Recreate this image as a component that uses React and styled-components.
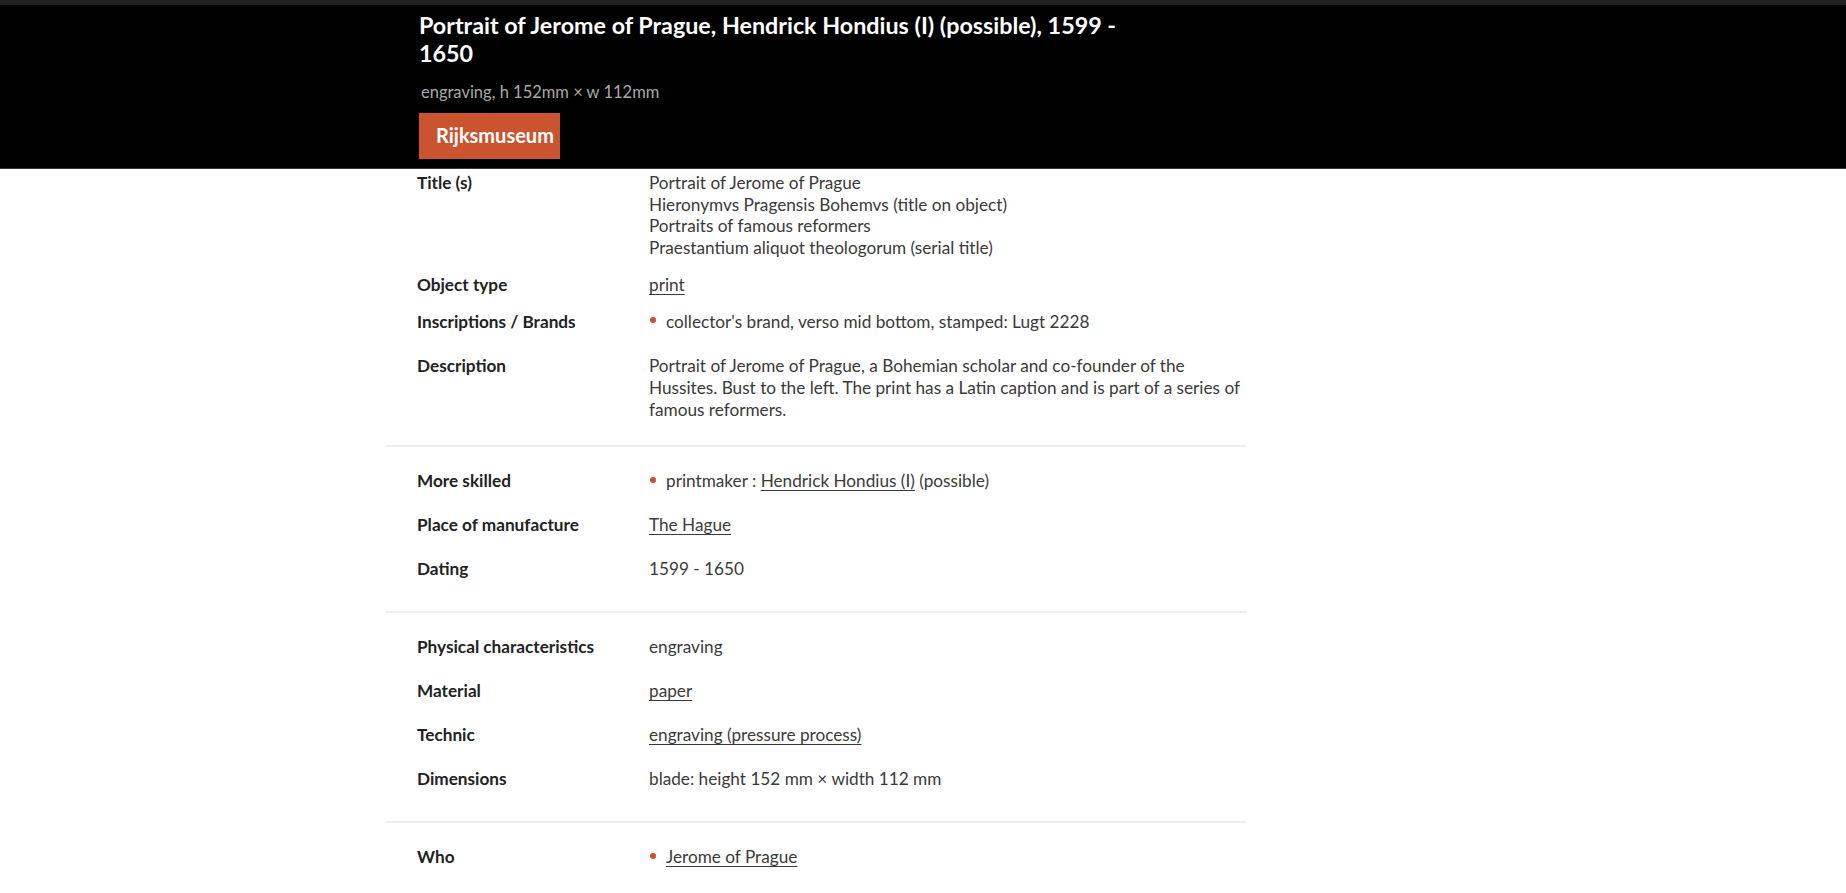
import React from 'react';
import styled, { createGlobalStyle } from 'styled-components';

const GlobalStyle = createGlobalStyle`
  html, body {
    margin: 0;
    padding: 0;
    background: #fff;
  }
  body {
    font-family: 'Lato', 'Liberation Sans', sans-serif;
    color: #333;
  }
`;

const TopStrip = styled.div`
  height: 5px;
  background: #212121;
`;

const Header = styled.header`
  background: #000;
  border-bottom: 1px solid #3a3a3a;
  padding: 6px 0 9px 419px;
`;

const HeaderTitle = styled.h1`
  margin: 0;
  max-width: 740px;
  font-size: 23.3px;
  line-height: 28px;
  font-weight: 700;
  color: #fff;
`;

const HeaderMeta = styled.p`
  margin: 14px 0 10px 2px;
  font-size: 16.5px;
  line-height: 22px;
  color: #a9a9a9;
`;

const BrandButton = styled.a`
  display: inline-flex;
  align-items: center;
  height: 46px;
  width: 141px;
  box-sizing: border-box;
  padding: 0 0 3px 17px;
  background: #c9542f;
  color: #fff;
  font-size: 20px;
  font-weight: 700;
  text-decoration: none;
`;

const Content = styled.main`
  width: 861px;
  margin-left: 385px;
`;

const Section = styled.section`
  display: flex;
  flex-direction: column;
  gap: ${({ $gap }) => $gap || 0}px;
  padding: ${({ $pad }) => $pad || '12px 0 21px'};
  padding-left: 32px;
  border-top: ${({ $first }) => ($first ? 'none' : '2px solid #eeeeee')};
`;

const Row = styled.div`
  display: grid;
  grid-template-columns: 232px 1fr;
  padding: ${({ $tight }) => ($tight ? '0' : '11px 0')};
  font-size: 17.2px;
  line-height: 21.7px;
`;

const Label = styled.div`
  font-weight: 700;
  color: #222;
`;

const Value = styled.div`
  color: #3a3a3a;
  max-width: 605px;
`;

const Link = styled.a`
  color: #3a3a3a;
  text-decoration: underline;
  text-underline-offset: 3px;
  text-decoration-thickness: 1px;
`;

const List = styled.ul`
  list-style: none;
  margin: 0 0 ${({ $after }) => $after || 0}px;
  padding: 0;
`;

const Item = styled.li`
  display: flex;
  align-items: center;
`;

const Dot = styled.span`
  flex: none;
  width: 6px;
  height: 6px;
  border-radius: 50%;
  background: #c9542f;
  margin: 0 10px 2px 1px;
`;

const Line = styled.span`
  display: block;
`;

export default function App() {
  return (
    <>
      <GlobalStyle />
      <TopStrip />
      <Header>
        <HeaderTitle>
          Portrait of Jerome of Prague, Hendrick Hondius (I) (possible), 1599 - 1650
        </HeaderTitle>
        <HeaderMeta>engraving, h 152mm × w 112mm</HeaderMeta>
        <BrandButton href="#">Rijksmuseum</BrandButton>
      </Header>

      <Content>
        <Section $first $gap={15} $pad="3px 0 25px">
          <Row $tight>
            <Label>Title (s)</Label>
            <Value>
              <Line>Portrait of Jerome of Prague</Line>
              <Line>Hieronymvs Pragensis Bohemvs (title on object)</Line>
              <Line>Portraits of famous reformers</Line>
              <Line>Praestantium aliquot theologorum (serial title)</Line>
            </Value>
          </Row>
          <Row $tight>
            <Label>Object type</Label>
            <Value>
              <Link href="#">print</Link>
            </Value>
          </Row>
          <Row $tight>
            <Label>Inscriptions / Brands</Label>
            <Value>
              <List $after={8}>
                <Item>
                  <Dot />
                  collector's brand, verso mid bottom, stamped: Lugt 2228
                </Item>
              </List>
            </Value>
          </Row>
          <Row $tight>
            <Label>Description</Label>
            <Value>
              Portrait of Jerome of Prague, a Bohemian scholar and co-founder of the
              Hussites. Bust to the left. The print has a Latin caption and is part of a
              series of famous reformers.
            </Value>
          </Row>
        </Section>

        <Section>
          <Row>
            <Label>More skilled</Label>
            <Value>
              <List>
                <Item>
                  <Dot />
                  <span>
                    printmaker : <Link href="#">Hendrick Hondius (I)</Link> (possible)
                  </span>
                </Item>
              </List>
            </Value>
          </Row>
          <Row>
            <Label>Place of manufacture</Label>
            <Value>
              <Link href="#">The Hague</Link>
            </Value>
          </Row>
          <Row>
            <Label>Dating</Label>
            <Value>1599 - 1650</Value>
          </Row>
        </Section>

        <Section>
          <Row>
            <Label>Physical characteristics</Label>
            <Value>engraving</Value>
          </Row>
          <Row>
            <Label>Material</Label>
            <Value>
              <Link href="#">paper</Link>
            </Value>
          </Row>
          <Row>
            <Label>Technic</Label>
            <Value>
              <Link href="#">engraving (pressure process)</Link>
            </Value>
          </Row>
          <Row>
            <Label>Dimensions</Label>
            <Value>blade: height 152 mm × width 112 mm</Value>
          </Row>
        </Section>

        <Section>
          <Row>
            <Label>Who</Label>
            <Value>
              <List>
                <Item>
                  <Dot />
                  <Link href="#">Jerome of Prague</Link>
                </Item>
              </List>
            </Value>
          </Row>
        </Section>
      </Content>
    </>
  );
}
